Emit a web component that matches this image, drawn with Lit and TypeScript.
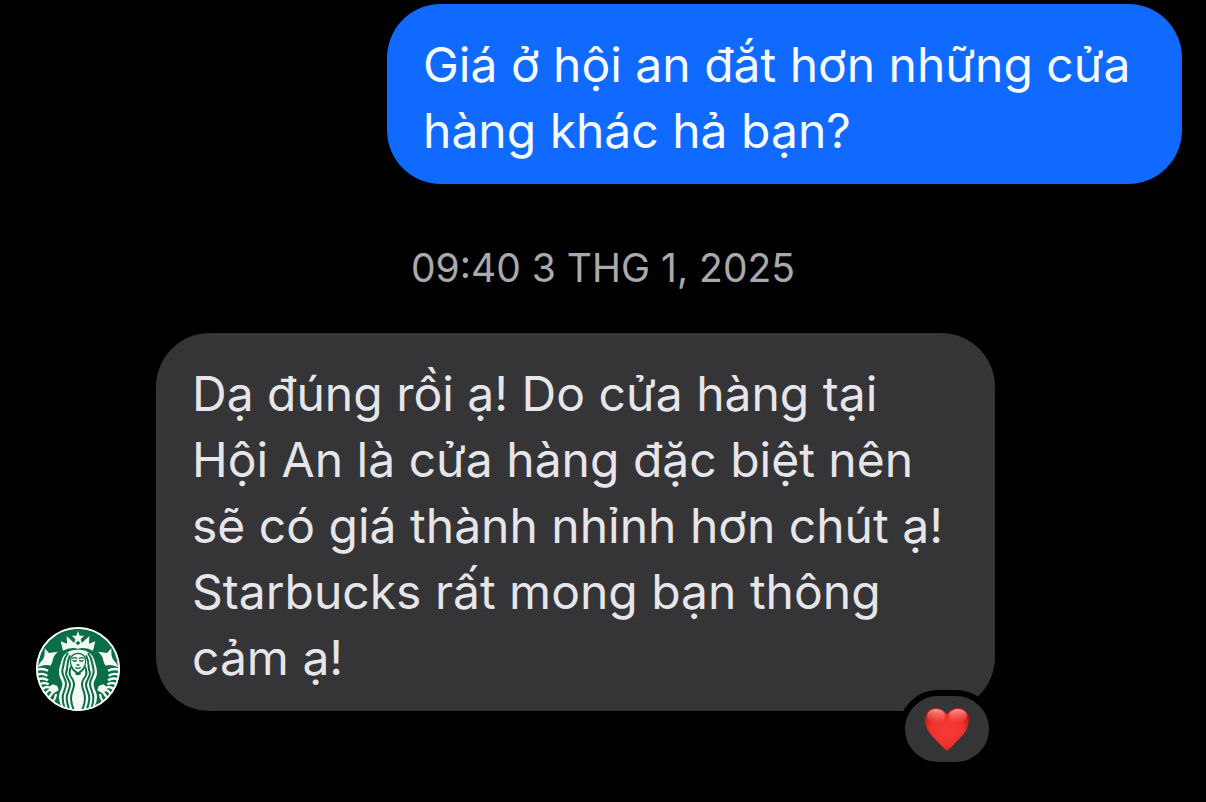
import { LitElement, html, css, svg } from 'lit';
import { customElement, property } from 'lit/decorators.js';

@customElement('brand-avatar')
export class BrandAvatar extends LitElement {
    static styles = css`
        :host {
            display: block;
            flex: none;
            width: 84px;
            height: 84px;
        }
        svg {
            display: block;
            width: 100%;
            height: 100%;
        }
        .green { fill: #0b6e45; }
        .white { fill: #f4faf6; }
        .strand {
            fill: none;
            stroke: #0b6e45;
            stroke-width: 6;
        }
        .scale {
            fill: none;
            stroke: #f4faf6;
            stroke-width: 7;
        }
        .ring {
            fill: none;
            stroke: #f4faf6;
            stroke-width: 5;
        }
        .face {
            fill: none;
            stroke: #0b6e45;
            stroke-width: 4;
            stroke-linecap: round;
        }
    `;

    // left half of the siren, the right half is the same thing mirrored
    half() {
        return svg`
            <path class="white" d="M50 91 L63 105 L90 101 Q76 113 75 124 Q73 136 67 143 Q52 138 29 148 Q34 134 44 125 Q51 118 50 91Z" />
            <path class="scale" d="M26 155 Q45 150 60 158 M27 170 Q44 164 58 173 M30 184 Q46 178 60 187 M35 199 Q48 191 62 199 M42 214 Q52 204 64 208 M51 228 Q59 217 70 213 M62 240 Q70 229 77 220 M75 251 Q83 240 84 228" />
            <path class="white" d="M62 208 L74 199 L88 204 L92 217 L78 225 L65 219Z" />
            <path class="white" d="M151 95 C122 94 106 107 101 127 C96 145 93 151 93 163 C93 180 103 187 103 199 C103 214 93 222 93 238 Q93 254 101 266 Q124 277 151 278Z" />
            <path class="strand" d="M120 105 C105 124 109 137 104 151 C98 170 114 181 114 197 C114 214 103 223 104 240 Q104 254 110 270" />
            <path class="strand" d="M126 112 C114 136 121 149 115 161 C110 175 126 185 126 200 C126 216 115 224 116 242 Q117 255 123 274" />
            <path class="strand" d="M129 146 C123 160 122 168 129 177 C137 187 140 196 137 207 C134 220 128 228 129 243 Q130 258 137 276" />
            <path class="white" d="M105 98 L98 70 L117 77 L116 54 L136 73 L144 76 L151 83 L151 92 Q125 86 105 98Z" />
        `;
    }

    render() {
        return html`
        <svg viewBox="24 27 252 252" role="img" aria-label="Starbucks">
            <circle class="white" cx="150" cy="153" r="126" />
            <circle class="green" cx="150" cy="153" r="121" />
            ${this.half()}
            <g transform="translate(300 0) scale(-1 1)">${this.half()}</g>
            <path class="white" d="M150 39 L155 53 L169 53 L158 63 L162 78 L150 69 L138 78 L142 63 L131 53 L145 53Z" />
            <path class="green" d="M150 104 C134 104 124 114 126 134 Q128 156 142 164 L142 169 Q150 175 158 169 L158 164 Q172 156 174 134 C176 114 166 104 150 104Z" />
            <path class="white" d="M150 108 C136 109 129 117 129 132 Q131 151 150 163 Q169 151 171 132 C171 117 164 109 150 108Z" />
            <path class="face" d="M134 121 Q139 117 146 121 M154 121 Q161 117 166 121 M135 128 Q140 131 145 128 M155 128 Q160 131 165 128 M147 141 L153 141 M143 149 Q150 153 157 149" />
            <circle class="ring" cx="150" cy="153" r="123" />
        </svg>
        `;
    }
}

@customElement('heart-reaction')
export class HeartReaction extends LitElement {
    static styles = css`
        button {
            display: flex;
            align-items: center;
            justify-content: center;
            box-sizing: border-box;
            width: 96px;
            height: 78px;
            padding: 0;
            border: 6px solid #000;
            border-radius: 39px;
            background: #353537;
            cursor: pointer;
        }
        svg {
            display: block;
            width: 46px;
            height: 46px;
        }
    `;

    render() {
        return html`
        <button aria-label="❤️ 1">
            <svg viewBox="0 0 46 46" aria-hidden="true">
                <defs>
                    <radialGradient id="body" cx="50%" cy="50%" r="60%">
                        <stop offset="0" stop-color="#f63a35" />
                        <stop offset="0.6" stop-color="#f0332e" />
                        <stop offset="1" stop-color="#c0120e" />
                    </radialGradient>
                    <linearGradient id="shine" x1="0" y1="0" x2="0" y2="1">
                        <stop offset="0" stop-color="#ffaaa3" stop-opacity="0.9" />
                        <stop offset="1" stop-color="#ff6a62" stop-opacity="0" />
                    </linearGradient>
                </defs>
                <path fill="url(#body)" d="M23 45 C20 43 16 38 9 31 C4 26 1 20 1 13 C1 6 6 2 12 2 C17 2 21 5 23 9 C25 5 29 2 34 2 C40 2 45 6 45 13 C45 20 42 26 37 31 C30 38 26 43 23 45Z" />
                <ellipse fill="url(#shine)" cx="12" cy="10" rx="9" ry="7" />
                <ellipse fill="url(#shine)" cx="34" cy="10" rx="9" ry="7" />
            </svg>
        </button>
        `;
    }
}

@customElement('chat-bubble')
export class ChatBubble extends LitElement {
    @property({ type: String, reflect: true }) kind = 'received';

    static styles = css`
        :host {
            display: block;
            position: relative;
            flex: 1;
            padding: 28px 36px 20px;
            border-radius: 54px;
            font-size: 48px;
            line-height: 66px;
        }
        :host([kind='sent']) {
            background: #116aff;
            color: #f4faff;
        }
        :host([kind='received']) {
            background: #353537;
            color: #e6e6ea;
        }
        p {
            margin: 0;
        }
        ::slotted(heart-reaction) {
            position: absolute;
            right: 0;
            bottom: -57px;
        }
    `;

    render() {
        return html`
        <p><slot></slot></p>
        <slot name="reaction"></slot>
        `;
    }
}

@customElement('app-root')
export class AppRoot extends LitElement {
    static styles = css`
        :host {
            display: block;
            box-sizing: border-box;
            min-height: 100vh;
            background: #000;
            font-family: Inter, 'Noto Sans', sans-serif;
        }
        main {
            display: flex;
            flex-direction: column;
            padding: 4px 24px 72px 36px;
        }
        .sent {
            display: flex;
            padding-left: 351px;
        }
        time {
            padding: 60px 0 41px;
            margin-right: 12px;
            color: #aaaaad;
            font-size: 39px;
            line-height: 48px;
            text-align: center;
        }
        .received {
            display: flex;
            align-items: flex-end;
            gap: 36px;
            padding-right: 187px;
        }
    `;

    render() {
        return html`
        <main>
            <div class="sent">
                <chat-bubble kind="sent">Giá ở hội an đắt hơn những cửa hàng khác hả bạn?</chat-bubble>
            </div>
            <time datetime="2025-01-03T09:40">09:40 3 THG 1, 2025</time>
            <div class="received">
                <brand-avatar></brand-avatar>
                <chat-bubble kind="received">Dạ đúng rồi ạ! Do cửa hàng tại Hội An là cửa hàng đặc biệt nên sẽ có giá thành nhỉnh hơn chút ạ! Starbucks rất mong bạn thông cảm ạ!<heart-reaction slot="reaction"></heart-reaction></chat-bubble>
            </div>
        </main>
        `;
    }
}
